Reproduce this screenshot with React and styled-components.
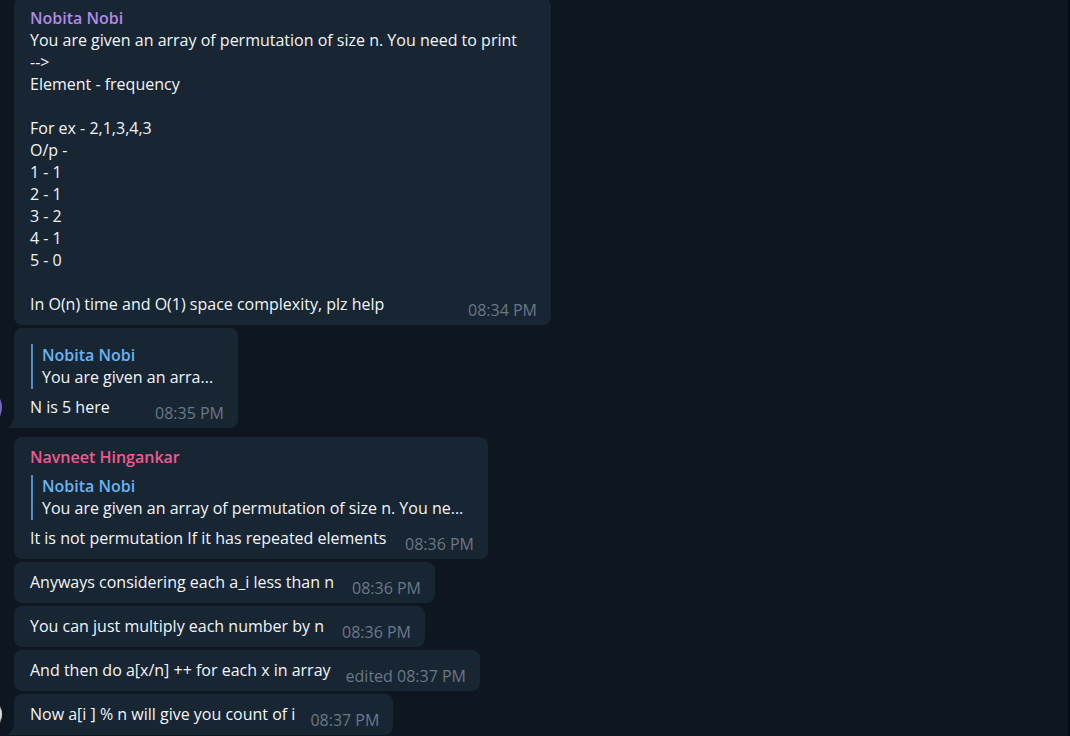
import React from "react";
import styled, { createGlobalStyle } from "styled-components";

const GlobalStyle = createGlobalStyle`
  * {
    box-sizing: border-box;
  }

  body {
    margin: 0;
    background: #0e1621;
    color: #f2f5f7;
    font-family: "Open Sans", "Noto Sans", sans-serif;
    font-size: 16px;
    line-height: 22px;
  }
`;

const ChatPane = styled.main`
  display: flex;
  flex-direction: column;
  justify-content: flex-end;
  gap: 9px;
  height: 100vh;
  padding-bottom: 1px;
  overflow: hidden;
  border-right: 2px solid #020d18;
`;

const Group = styled.section`
  display: flex;
  flex: none;
  align-items: flex-end;
  gap: 12px;
  margin-left: -39px;
`;

const Avatar = styled.div`
  flex: none;
  width: 41px;
  height: 41px;
  border-radius: 50%;
  background: ${({ $fill }) => $fill};
`;

const Messages = styled.div`
  display: flex;
  flex-direction: column;
  align-items: flex-start;
  gap: 3px;
  min-width: 0;
`;

const Bubble = styled.article`
  position: relative;
  min-width: ${({ $minWidth }) => ($minWidth ? `${$minWidth}px` : "0")};
  max-width: 537px;
  padding: 9px 14px 4px 16px;
  border-radius: ${({ $tail }) => ($tail ? "8px 8px 8px 0" : "8px")};
  background: #182533;
`;

const TailShape = styled.svg`
  position: absolute;
  left: -7px;
  bottom: 0;
  width: 7px;
  height: 14px;
  fill: #182533;
`;

const Author = styled.h2`
  margin: 0;
  font-size: 16px;
  font-weight: 600;
  line-height: 22px;
  color: ${({ $color }) => $color};
`;

const Quote = styled.blockquote`
  margin: 7px 0 7px 1px;
  padding: 0 0 1px 9px;
  border-left: 2px solid #4f8fc4;
`;

const QuoteText = styled.p`
  margin: 0;
  white-space: nowrap;
`;

const Paragraph = styled.p`
  margin: 0;
  white-space: pre-line;
`;

const LastLine = styled.div`
  display: flex;
  justify-content: space-between;
  align-items: flex-end;
  gap: 15px;
`;

const LastText = styled.p`
  margin: 0;
  padding-bottom: 6px;
`;

const Stamp = styled.footer`
  flex: none;
  color: #6a7886;
`;

const groups = [
  {
    id: "nobita",
    avatar: "#7c67bd",
    messages: [
      {
        author: "Nobita Nobi",
        color: "#b08ae6",
        minWidth: 537,
        body: `You are given an array of permutation of size n. You need to print
-->
Element - frequency

For ex - 2,1,3,4,3
O/p -
1 - 1
2 - 1
3 - 2
4 - 1
5 - 0

`,
        last: "In O(n) time and O(1) space complexity, plz help",
        time: "08:34 PM",
      },
      {
        quote: "You are given an arra...",
        minWidth: 224,
        last: "N is 5 here",
        time: "08:35 PM",
      },
    ],
  },
  {
    id: "navneet",
    avatar: "linear-gradient(#3a3536 25%, #e4e0de 40%, #d8d2cf 58%, #5a4238 72%)",
    messages: [
      {
        author: "Navneet Hingankar",
        color: "#ee5a8f",
        quote: "You are given an array of permutation of size n. You ne...",
        minWidth: 474,
        last: "It is not permutation If it has repeated elements",
        time: "08:36 PM",
      },
      { minWidth: 421, last: "Anyways considering each a_i less than n", time: "08:36 PM" },
      { minWidth: 411, last: "You can just multiply each number by n", time: "08:36 PM" },
      { last: "And then do a[x/n] ++ for each x in array", time: "08:37 PM", edited: true },
      { last: "Now a[i ] % n will give you count of i", time: "08:37 PM" },
    ],
  },
];

function Tail() {
  return (
    <TailShape viewBox="0 0 7 14" aria-hidden="true">
      <path d="M7 0 C7 7 5 11 0 14 H7 Z" />
    </TailShape>
  );
}

function Message({ message, tail }) {
  const { author, color, quote, minWidth, body, last, time, edited } = message;
  return (
    <Bubble $minWidth={minWidth} $tail={tail}>
      {author && <Author $color={color}>{author}</Author>}
      {quote && (
        <Quote>
          <Author $color="#6ab3f3">Nobita Nobi</Author>
          <QuoteText>{quote}</QuoteText>
        </Quote>
      )}
      {body && <Paragraph>{body}</Paragraph>}
      <LastLine>
        <LastText>{last}</LastText>
        <Stamp>
          {edited && "edited "}
          <time>{time}</time>
        </Stamp>
      </LastLine>
      {tail && <Tail />}
    </Bubble>
  );
}

export default function App() {
  return (
    <>
      <GlobalStyle />
      <ChatPane>
        {groups.map((group) => (
          <Group key={group.id}>
            <Avatar $fill={group.avatar} />
            <Messages>
              {group.messages.map((message, i) => (
                <Message
                  key={message.last}
                  message={message}
                  tail={i === group.messages.length - 1}
                />
              ))}
            </Messages>
          </Group>
        ))}
      </ChatPane>
    </>
  );
}
